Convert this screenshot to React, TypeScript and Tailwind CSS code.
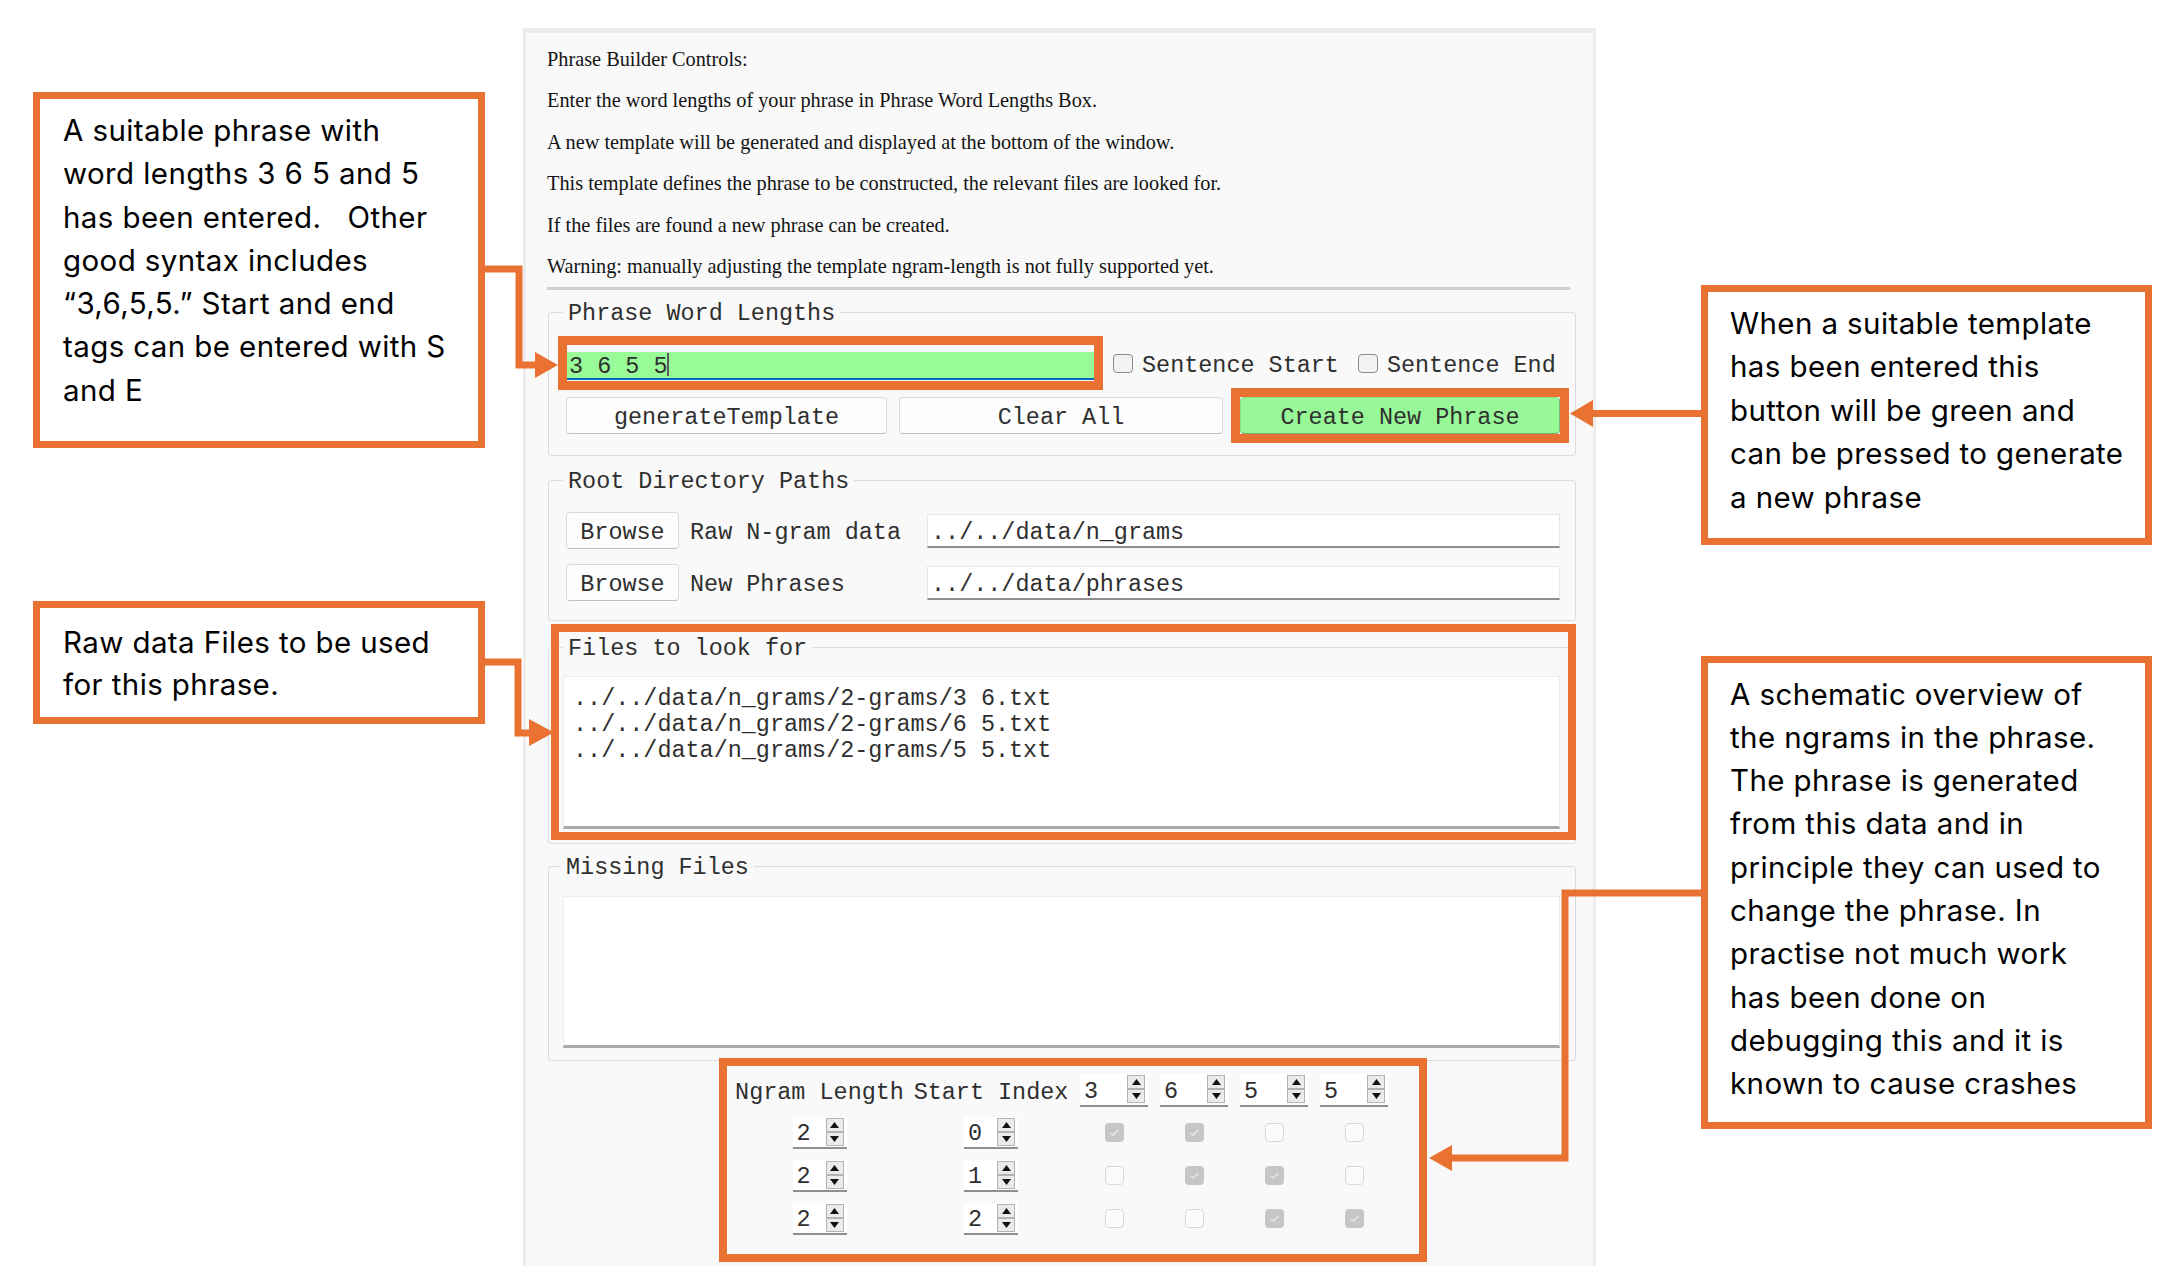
import React from 'react';

const MONO = "font-['Liberation_Mono',monospace] text-[23.45px] text-[#2f2f2f]";
// glyphs in the reference sit a touch lower than Liberation Mono's em box
const MONO_TXT = `${MONO} translate-y-[2px]`;
const NOTE = "font-['Inter',sans-serif] text-[29.5px] tracking-[0.4px] text-black";

const infoLines = [
  'Phrase Builder Controls:',
  'Enter the word lengths of your phrase in Phrase Word Lengths Box.',
  'A new template will be generated and displayed at the bottom of the window.',
  'This template defines the phrase to be constructed, the relevant files are looked for.',
  'If the files are found a new phrase can be created.',
  'Warning: manually adjusting the template ngram-length is not fully supported yet.',
];

const files = [
  '../../data/n_grams/2-grams/3 6.txt',
  '../../data/n_grams/2-grams/6 5.txt',
  '../../data/n_grams/2-grams/5 5.txt',
];

// ngram rows: length, start index, which words are covered
const ngramRows = [
  { len: '2', start: '0', on: [true, true, false, false] },
  { len: '2', start: '1', on: [false, true, true, false] },
  { len: '2', start: '2', on: [false, false, true, true] },
];

function LabelFrame({
  title,
  legendLeft,
  className,
  children,
}: {
  title: string;
  legendLeft: string;
  className: string;
  children?: React.ReactNode;
}) {
  return (
    <div className={`relative ml-[22px] w-[1028px] border border-[#dcdcdc] rounded-[3px] ${className}`}>
      <span className={`absolute top-[-12px] ${legendLeft} px-[5px] bg-[#f9f9f9] leading-[26px] whitespace-pre ${MONO}`}>
        {title}
      </span>
      {children}
    </div>
  );
}

function Btn({ label, w, green }: { label: string; w: string; green?: boolean }) {
  return (
    <div
      className={`${w} h-[37px] flex items-center justify-center rounded-[4px] border ${
        green
          ? 'bg-[#98f898] border-[#8ee08e] border-b-[#6fae6f] border-r-[#7cb97c]'
          : 'bg-[#fdfdfd] border-[#dadada] border-b-[#bfbfbf]'
      }`}
    >
      <span className={`whitespace-pre leading-none ${MONO_TXT}`}>{label}</span>
    </div>
  );
}

function Checkbox() {
  return <div className="w-[20px] h-[19px] rounded-[4px] border border-[#8a8a8a] bg-[#f3f3f3]" />;
}

function DisabledCheck({ on }: { on: boolean }) {
  if (!on) return <div className="w-[19px] h-[19px] rounded-[4px] border border-[#d8d8d8] bg-[#fbfbfb]" />;
  return (
    <div className="w-[19px] h-[19px] rounded-[4px] bg-[#c6c6c6] flex items-center justify-center">
      <svg width="13" height="13" viewBox="0 0 14 14" fill="none">
        <path d="M3 7.2l2.6 2.6L11 4.4" stroke="#ededed" strokeWidth="1.4" />
      </svg>
    </div>
  );
}

function SpinArrow({ up }: { up?: boolean }) {
  return (
    <div className="w-[18px] h-[14px] border border-[#b3b3b3] bg-[#ebebeb] flex items-center justify-center">
      <svg width="9" height="6" viewBox="0 0 9 6">
        <polygon points={up ? '0,6 4.5,0 9,6' : '0,0 4.5,6 9,0'} fill="#111" />
      </svg>
    </div>
  );
}

function Spin({ value, w, h }: { value: string; w: string; h: string }) {
  return (
    <div className={`${w} ${h} flex items-center bg-white border-b-2 border-[#8f8f8f]`}>
      <span className={`flex-1 pl-[4px] leading-none ${MONO_TXT}`}>{value}</span>
      <div className="flex flex-col mr-[3px]">
        <SpinArrow up />
        <SpinArrow />
      </div>
    </div>
  );
}

function PathRow({ label, path, className }: { label: string; path: string; className?: string }) {
  return (
    <div className={`flex items-center h-[34px] -ml-[1px] ${className ?? ''}`}>
      <Btn label="Browse" w="w-[113px]" />
      <span className={`ml-[11px] w-[237px] whitespace-pre leading-none ${MONO_TXT}`}>{label}</span>
      <div className="w-[633px] h-[34px] flex items-center bg-white border border-[#e6e6e6] border-b-2 border-b-[#8f8f8f] pl-[3px]">
        <span className={`leading-none ${MONO_TXT}`}>{path}</span>
      </div>
    </div>
  );
}

function Note({ className, lines, lh }: { className: string; lines: string[]; lh: string }) {
  return (
    <div className={`absolute bg-white border-[7px] border-[#e97132] ${className}`}>
      {lines.map((l, i) => (
        <div key={i} className={`${lh} whitespace-pre ${NOTE}`}>
          {l}
        </div>
      ))}
    </div>
  );
}

function Window() {
  return (
    <div className="ml-[523px] mt-[28px] w-[1073px] h-[1238px] flex flex-col bg-[#f9f9f9] border-t-[5px] border-x-[3px] border-[#ececec]">
      {/* Info text */}
      <div className="pl-[21px] pt-[5.5px]">
        {infoLines.map((t) => (
          <div key={t} className="h-[41.4px] flex items-center font-['Liberation_Serif',serif] text-[20.3px] text-[#141414] whitespace-pre">
            {t}
          </div>
        ))}
      </div>
      <div className="ml-[21px] w-[1023px] h-[3px] bg-[#d0d0d0]" />

      {/* Phrase Word Lengths */}
      <LabelFrame title="Phrase Word Lengths" legendLeft="left-[14px]" className="mt-[22px] h-[144px]">
        <div className="pl-[18px] pt-[39px]">
          <div className="flex items-start">
            <div className="w-[527px] h-[28px] flex items-center bg-[#98fb98] border-b-2 border-[#0067c0] pl-[2px]">
              <span className={`leading-none whitespace-pre ${MONO_TXT}`}>3 6 5 5</span>
              <span className="w-[2px] h-[23px] bg-[#5a5a5a]" />
            </div>
            <div className="flex items-center h-[23px] ml-[19px]">
              <Checkbox />
              <span className={`ml-[9px] whitespace-pre leading-none ${MONO_TXT}`}>Sentence Start</span>
              <div className="ml-[19px]">
                <Checkbox />
              </div>
              <span className={`ml-[9px] whitespace-pre leading-none ${MONO_TXT}`}>Sentence End</span>
            </div>
          </div>
          <div className="flex mt-[17px] -ml-[1px]">
            <Btn label="generateTemplate" w="w-[321px]" />
            <div className="ml-[12px]">
              <Btn label="Clear All" w="w-[324px]" />
            </div>
            <div className="ml-[17px]">
              <Btn label="Create New Phrase" w="w-[320px]" green />
            </div>
          </div>
        </div>
      </LabelFrame>

      {/* Root Directory Paths */}
      <LabelFrame title="Root Directory Paths" legendLeft="left-[14px]" className="mt-[24px] h-[141px]">
        <div className="pl-[18px] pt-[33px]">
          <PathRow label="Raw N-gram data" path="../../data/n_grams" />
          <PathRow label="New Phrases" path="../../data/phrases" className="mt-[18px]" />
        </div>
      </LabelFrame>

      {/* Files to look for */}
      <LabelFrame title="Files to look for" legendLeft="left-[14px]" className="mt-[26px] h-[197px]">
        <div className="pl-[14px] pt-[28px]">
          <div className="w-[997px] h-[153px] bg-white border border-[#ececec] border-b-[3px] border-b-[#a9a9a9] pl-[9px] pt-[7px]">
            {files.map((f) => (
              <div key={f} className={`leading-[26px] whitespace-pre ${MONO_TXT}`}>
                {f}
              </div>
            ))}
          </div>
        </div>
      </LabelFrame>

      {/* Missing Files */}
      <LabelFrame title="Missing Files" legendLeft="left-[12px]" className="mt-[22px] h-[195px]">
        <div className="pl-[14px] pt-[29px]">
          <div className="w-[997px] h-[152px] bg-white border border-[#ececec] border-b-[3px] border-b-[#a9a9a9]" />
        </div>
      </LabelFrame>

      {/* Ngram template grid */}
      <div className="ml-[209px] mt-[13px]">
        <div className="grid grid-cols-[169px_174px_80px_80px_80px_80px] h-[33px] items-center">
          <span className={`text-center whitespace-pre leading-none ${MONO_TXT}`}>Ngram Length</span>
          <span className={`text-center whitespace-pre leading-none ${MONO_TXT}`}>Start Index</span>
          {['3', '6', '5', '5'].map((v, i) => (
            <div key={i} className="pl-[2px]">
              <Spin value={v} w="w-[68px]" h="h-[33px]" />
            </div>
          ))}
        </div>
        {ngramRows.map((r, ri) => (
          <div
            key={ri}
            className={`grid grid-cols-[169px_174px_80px_80px_80px_80px] h-[32px] items-center ${ri === 0 ? 'mt-[10px]' : 'mt-[11px]'}`}
          >
            <div className="flex justify-center">
              <Spin value={r.len} w="w-[54px]" h="h-[32px]" />
            </div>
            <div className="flex justify-center">
              <Spin value={r.start} w="w-[54px]" h="h-[32px]" />
            </div>
            {r.on.map((on, ci) => (
              <div key={ci} className="pl-[2px]">
                <div className="w-[68px] flex justify-center">
                  <DisabledCheck on={on} />
                </div>
              </div>
            ))}
          </div>
        ))}
      </div>
    </div>
  );
}

export default function App() {
  return (
    <div className="relative w-[2172px] h-[1283px] bg-white overflow-hidden">
      <Window />

      {/* highlight frames over the window */}
      <div className="absolute left-[558px] top-[336px] w-[545px] h-[54px] border-[9px] border-[#e97132]" />
      <div className="absolute left-[1231px] top-[388px] w-[338px] h-[55px] border-[9px] border-[#e97132]" />
      <div className="absolute left-[551px] top-[624px] w-[1025px] h-[216px] border-[8px] border-[#e97132]" />
      <div className="absolute left-[719px] top-[1058px] w-[708px] h-[204px] border-[8px] border-[#e97132]" />

      {/* connectors */}
      <svg className="absolute left-0 top-0 pointer-events-none" width="2172" height="1283" viewBox="0 0 2172 1283">
        <g stroke="#e97132" strokeWidth="7" fill="none" strokeLinejoin="miter" strokeLinecap="butt">
          <path d="M484 269 H519 V365 H537" />
          <path d="M484 662 H518 V733 H531" />
          <path d="M1701 413.5 H1591" />
          <path d="M1701 893 H1565 V1158 H1450" />
        </g>
        <g fill="#e97132">
          <polygon points="535,352 558,365 535,378" />
          <polygon points="529,719 554,732.5 529,746" />
          <polygon points="1593,400 1570,413.5 1593,427" />
          <polygon points="1452,1145 1429,1158 1452,1171" />
        </g>
      </svg>

      {/* callouts */}
      <Note
        className="left-[33px] top-[92px] w-[452px] h-[356px] pl-[23px] pt-[10px]"
        lh="leading-[43.3px]"
        lines={[
          'A suitable phrase with',
          'word lengths 3 6 5 and 5',
          'has been entered.   Other',
          'good syntax includes',
          '\u201c3,6,5,5.\u201d Start and end',
          'tags can be entered with S',
          'and E',
        ]}
      />
      <Note
        className="left-[33px] top-[601px] w-[452px] h-[123px] pl-[23px] pt-[14px]"
        lh="leading-[41.6px]"
        lines={['Raw data Files to be used', 'for this phrase.']}
      />
      <Note
        className="left-[1701px] top-[285px] w-[451px] h-[260px] pl-[22px] pt-[10px]"
        lh="leading-[43.4px]"
        lines={[
          'When a suitable template',
          'has been entered this',
          'button will be green and',
          'can be pressed to generate',
          'a new phrase',
        ]}
      />
      <Note
        className="left-[1701px] top-[656px] w-[451px] h-[473px] pl-[22px] pt-[9.5px]"
        lh="leading-[43.3px]"
        lines={[
          'A schematic overview of',
          'the ngrams in the phrase.',
          'The phrase is generated',
          'from this data and in',
          'principle they can used to',
          'change the phrase. In',
          'practise not much work',
          'has been done on',
          'debugging this and it is',
          'known to cause crashes',
        ]}
      />
    </div>
  );
}
